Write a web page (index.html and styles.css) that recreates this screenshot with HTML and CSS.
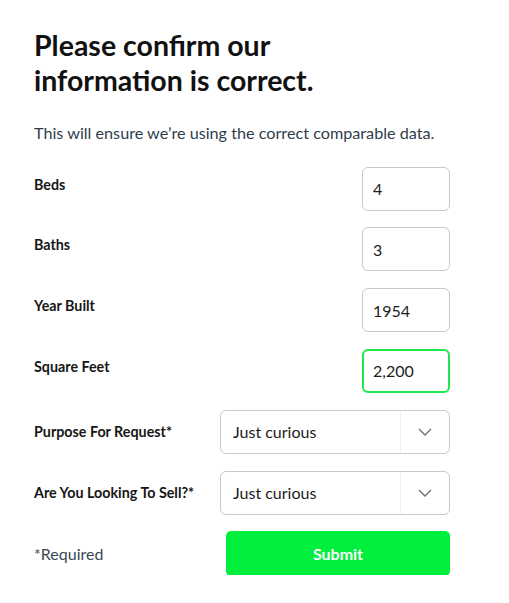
FILE: index.html
```html
<!DOCTYPE html>
<html lang="en">
<head>
    <meta charset="UTF-8">
    <meta name="viewport" content="width=device-width, initial-scale=1.0">
    <title>Confirm Property Information</title>
    <link rel="stylesheet" href="styles.css">
</head>
<body>
    <form class="confirm-form">
        <h1>Please confirm our information is correct.</h1>
        <p class="subtitle">This will ensure we’re using the correct comparable data.</p>

        <div class="row field">
            <label for="beds">Beds</label>
            <input id="beds" class="text-input" type="text" value="4">
        </div>
        <div class="row field">
            <label for="baths">Baths</label>
            <input id="baths" class="text-input" type="text" value="3">
        </div>
        <div class="row field">
            <label for="year">Year Built</label>
            <input id="year" class="text-input" type="text" value="1954">
        </div>
        <div class="row field">
            <label for="sqft">Square Feet</label>
            <input id="sqft" class="text-input focused" type="text" value="2,200">
        </div>

        <div class="row">
            <label for="purpose">Purpose For Request*</label>
            <div class="select-wrap">
                <select id="purpose">
                    <option>Just curious</option>
                    <option>Refinancing</option>
                    <option>Buying</option>
                </select>
                <span class="chevron">
                    <svg width="14" height="8" viewBox="0 0 14 8"><path d="M1 1l6 6 6-6" fill="none" stroke="#6b7178" stroke-width="1.4"/></svg>
                </span>
            </div>
        </div>
        <div class="row">
            <label for="sell">Are You Looking To Sell?*</label>
            <div class="select-wrap">
                <select id="sell">
                    <option>Just curious</option>
                    <option>Yes</option>
                    <option>No</option>
                </select>
                <span class="chevron">
                    <svg width="14" height="8" viewBox="0 0 14 8"><path d="M1 1l6 6 6-6" fill="none" stroke="#6b7178" stroke-width="1.4"/></svg>
                </span>
            </div>
        </div>

        <div class="row footer">
            <span class="required">*Required</span>
            <button type="button" class="submit">Submit</button>
        </div>
    </form>
</body>
</html>
```

FILE: styles.css
```css
body {
    font-family: Lato, 'Noto Sans', sans-serif;
    background-color: #fff;
    margin: 0;
    color: #111;
}

.confirm-form {
    width: 416px;
    padding: 28px 0 0 34px;
    display: flex;
    flex-direction: column;
    gap: 16.8px;
}

h1 {
    margin: 0;
    width: 300px;
    font-size: 28.5px;
    line-height: 35px;
    font-weight: 700;
    color: #111;
}

.subtitle {
    margin: 7px 0 6px;
    font-size: 16.2px;
    line-height: 22px;
    color: #2f3d4c;
}

.row {
    display: flex;
    justify-content: space-between;
    align-items: center;
    height: 44px;
}

.row label {
    font-size: 14.3px;
    font-weight: 700;
    line-height: 20px;
    color: #161616;
}

.row.field label {
    padding-bottom: 8px;
}

.text-input {
    box-sizing: border-box;
    width: 88px;
    height: 44px;
    padding: 0 10px;
    font-family: inherit;
    font-size: 16px;
    color: #1c1c1c;
    border: 1px solid #c6cacf;
    border-radius: 6px;
    outline: none;
}

.text-input.focused {
    border: 2px solid #1ee84a;
    padding: 0 9px;
}

.select-wrap {
    position: relative;
    width: 230px;
    height: 44px;
}

.select-wrap select {
    appearance: none;
    -webkit-appearance: none;
    box-sizing: border-box;
    width: 100%;
    height: 100%;
    padding: 0 0 0 12px;
    font-family: inherit;
    font-size: 16px;
    color: #1c1c1c;
    background-color: #fff;
    border: 1px solid #c6cacf;
    border-radius: 6px;
    outline: none;
}

.chevron {
    position: absolute;
    top: 1px;
    right: 1px;
    bottom: 1px;
    width: 48px;
    border-left: 1px solid #eef0f2;
    display: flex;
    align-items: center;
    justify-content: center;
    pointer-events: none;
}

.required {
    font-size: 16px;
    color: #3a4756;
}

.submit {
    width: 224px;
    height: 45px;
    border: none;
    border-radius: 5px;
    background-color: #00ee3c;
    color: #fff;
    font-family: inherit;
    font-size: 16px;
    font-weight: 700;
    cursor: pointer;
}
```
